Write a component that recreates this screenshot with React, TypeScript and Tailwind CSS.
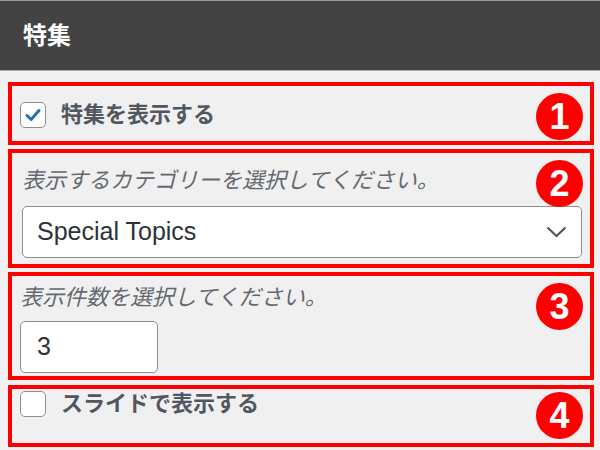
const jp = "font-['Liberation_Sans','Noto_Sans_CJK_JP',sans-serif]";

const Badge = ({ n, top }: { n: number; top: string }) => (
  <div
    className={`absolute right-[7px] ${top} w-[47px] h-[47px] rounded-full bg-[#ff0000] text-white flex items-center justify-center text-[36px] font-bold leading-none font-['Liberation_Sans',sans-serif]`}
  >
    {n}
  </div>
);

const Checkbox = ({ checked }: { checked?: boolean }) => (
  <div className="w-[26px] h-[26px] shrink-0 rounded-[5px] border border-[#8c8f94] bg-white flex items-center justify-center">
    {checked && (
      <svg width="20" height="20" viewBox="0 0 20 20">
        <path d="M4 10.5 L8.2 14.5 L16 5.5" fill="none" stroke="#2271b1" strokeWidth="3" strokeLinecap="round" strokeLinejoin="round" />
      </svg>
    )}
  </div>
);

const App = () => {
  return (
    <div className={`w-[600px] h-[450px] bg-[#f0f0f0] overflow-hidden ${jp}`}>
      <div className="h-[71px] bg-[#434343] border-t border-[#9c9c9c] border-b border-b-[#a8a8a8] flex items-center px-[23px]">
        <h1 className="text-white font-bold text-[24px] leading-none">特集</h1>
      </div>

      <div className="flex flex-col gap-1 pl-2 pt-[11px]">
        <div className="relative w-[586px] h-[63px] border-4 border-[#ff0000] flex items-start gap-[15px] pl-2 pt-4">
          <Checkbox checked />
          <span className="text-[22px] leading-[26px] font-bold text-[#50575e]">特集を表示する</span>
          <Badge n={1} top="top-[7px]" />
        </div>

        <div className="relative w-[586px] h-[119px] border-4 border-[#ff0000] pl-[10px] pt-[15px]">
          <p className="text-[22px] leading-[26px] italic text-[#646970]">表示するカテゴリーを選択してください。</p>
          <div className="mt-[12px] w-[560px] h-[52px] rounded-[5px] border border-[#8c8f94] bg-white flex items-center justify-between pl-[14px] pr-[14px]">
            <span className="text-[25px] text-[#2c3338] font-['Liberation_Sans',sans-serif]">Special Topics</span>
            <svg width="21" height="12" viewBox="0 0 21 12">
              <path d="M1.5 1.5 L10.5 10 L19.5 1.5" fill="none" stroke="#50575e" strokeWidth="2.2" />
            </svg>
          </div>
          <Badge n={2} top="top-[7px]" />
        </div>

        <div className="relative w-[586px] h-[108px] border-4 border-[#ff0000] pl-2 pt-[9px]">
          <p className="text-[22px] leading-[26px] italic text-[#646970]">表示件数を選択してください。</p>
          <div className="mt-[10px] w-[138px] h-[52px] rounded-[5px] border border-[#8c8f94] bg-white flex items-center pl-[16px]">
            <span className="text-[25px] text-[#2c3338] font-['Liberation_Sans',sans-serif]">3</span>
          </div>
          <Badge n={3} top="top-[7px]" />
        </div>

        <div className="relative w-[586px] h-[62px] mt-px border-4 border-[#ff0000] flex items-start gap-[15px] pl-2 pt-[2px]">
          <Checkbox />
          <span className="text-[22px] leading-[26px] font-bold text-[#50575e]">スライドで表示する</span>
          <Badge n={4} top="top-[3px]" />
        </div>
      </div>
    </div>
  );
};

export default App;
